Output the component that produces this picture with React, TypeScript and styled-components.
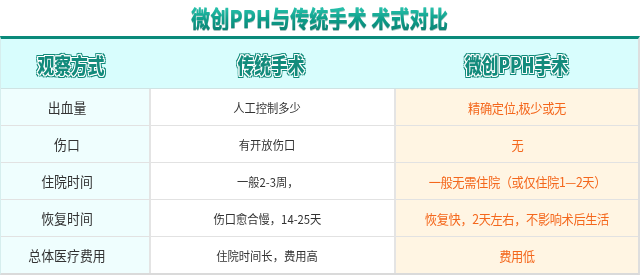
import React from "react";
import styled, { createGlobalStyle } from "styled-components";

const Global = createGlobalStyle`
  html, body { margin: 0; padding: 0; background: #ffffff; }
  body { font-family: "Noto Sans CJK SC", "Noto Sans", sans-serif; }
`;

const Page = styled.div`
  width: 640px;
  height: 277px;
  overflow: hidden;
  background: #fff;
`;

const TitleBar = styled.div`
  height: 36px;
  display: flex;
  align-items: center;
  justify-content: center;
`;

const Title = styled.h1`
  margin: 0;
  display: inline-block;
  font-size: 24px;
  font-weight: 900;
  line-height: 1;
  letter-spacing: 0;
  transform: scaleX(0.8);
  background: linear-gradient(180deg, #2cc6b0 0%, #0e9e8a 55%, #0b8576 100%);
  -webkit-background-clip: text;
  background-clip: text;
  color: transparent;
  filter: drop-shadow(0 1px 0 rgba(0, 80, 70, 0.35));
`;

const Table = styled.div`
  display: grid;
  grid-template-columns: 150px 245px 1fr;
  border-top: 3px solid #0a8a7a;
  border-left: 1px solid #d6eeee;
  border-right: 2px solid #dedede;
  border-bottom: 2px solid #dadada;
`;

const HeadCell = styled.div<{ $shift: number }>`
  height: 49px;
  background: #d8fdfd;
  border-bottom: 1px solid #cfe3e3;
  display: flex;
  align-items: center;
  justify-content: center;
  padding-right: ${(p) => p.$shift}px;
`;

const HeadText = styled.span`
  display: inline-block;
  font-size: 21px;
  font-weight: 900;
  color: #138b7c;
  transform: scaleX(0.8);
  text-shadow:
    1px 0 0 #fff, -1px 0 0 #fff, 0 1px 0 #fff, 0 -1px 0 #fff,
    1px 1px 0 #fff, -1px -1px 0 #fff, 1px -1px 0 #fff, -1px 1px 0 #fff,
    2px 0 0 #0f8a7a, -2px 0 0 #0f8a7a, 0 2px 0 #0f8a7a, 0 -2px 0 #0f8a7a,
    2px 2px 0 #0f8a7a, -2px -2px 0 #0f8a7a, 2px -2px 0 #0f8a7a, -2px 2px 0 #0f8a7a;
`;

type Kind = "label" | "old" | "new";

const Cell = styled.div<{ $kind: Kind; $last?: boolean }>`
  height: 36px;
  display: flex;
  align-items: center;
  justify-content: center;
  padding-right: ${(p) => (p.$kind === "label" ? "16px" : p.$kind === "old" ? "10px" : "0")};
  border-bottom: ${(p) => (p.$last ? "none" : "1px solid #e2e2e2")};
  background: ${(p) =>
    p.$kind === "label" ? "#effefe" : p.$kind === "old" ? "#ffffff" : "#fff5e3"};
  border-right: ${(p) => (p.$kind === "new" ? "none" : "2px solid #e4e4e4")};
  color: ${(p) => (p.$kind === "new" ? "#f4671c" : "#333333")};
  font-size: ${(p) => (p.$kind === "label" ? "14px" : p.$kind === "old" ? "12px" : "13px")};
  letter-spacing: ${(p) => (p.$kind === "new" ? "-0.4px" : "0")};
  white-space: nowrap;
`;

const CellText = styled.span<{ $kind: Kind }>`
  display: inline-block;
  transform: ${(p) => (p.$kind === "old" ? "scaleX(0.94)" : p.$kind === "new" ? "scaleX(0.94)" : "scaleX(0.92)")};
`;

const rows = [
  ["出血量", "人工控制多少", "精确定位,极少或无"],
  ["伤口", "有开放伤口", "无"],
  ["住院时间", "一般2-3周，", "一般无需住院（或仅住院1—2天）"],
  ["恢复时间", "伤口愈合慢，14-25天", "恢复快，2天左右，不影响术后生活"],
  ["总体医疗费用", "住院时间长，费用高", "费用低"],
];

const kinds: Kind[] = ["label", "old", "new"];
const headShift = [10, 6, 0];

export default function App() {
  return (
    <Page>
      <Global />
      <TitleBar>
        <Title>微创PPH与传统手术 术式对比</Title>
      </TitleBar>
      <Table>
        {["观察方式", "传统手术", "微创PPH手术"].map((h, j) => (
          <HeadCell key={h} $shift={headShift[j]}>
            <HeadText>{h}</HeadText>
          </HeadCell>
        ))}
        {rows.map((r, i) =>
          r.map((t, j) => (
            <Cell key={`${i}-${j}`} $kind={kinds[j]} $last={i === rows.length - 1}>
              <CellText $kind={kinds[j]}>{t}</CellText>
            </Cell>
          ))
        )}
      </Table>
    </Page>
  );
}
